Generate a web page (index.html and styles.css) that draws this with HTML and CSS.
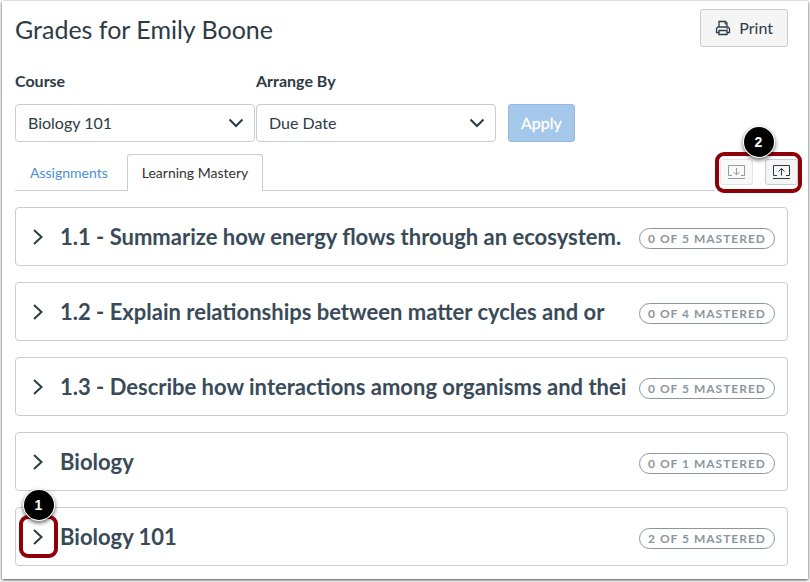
FILE: index.html
```html
<!DOCTYPE html>
<html lang="en">
  <head>
    <meta charset="UTF-8" />
    <meta name="viewport" content="width=device-width, initial-scale=1.0" />
    <title>Grades for Emily Boone</title>
    <link rel="stylesheet" href="styles.css">
  </head>
  <body>
    <main class="panel">
      <header class="header">
        <h1>Grades for Emily Boone</h1>
        <button type="button" class="btn">
          <svg width="16" height="16" viewBox="0 0 16 16" aria-hidden="true">
            <path d="M4 7V1.500h6.500L12 3v4M4 12.500H1.500v-4L3 7h10l1.500 1.500v4H12M4 10.500h8v4H4z" stroke-width="1.300" />
            <path d="M10 1.500V4h2M11.500 8.700h1.500" />
          </svg>
          Print
        </button>
      </header>

      <form class="filters">
        <div class="field">
          <label for="course">Course</label>
          <div class="select-wrap">
            <select id="course"><option>Biology 101</option></select>
            <svg class="caret" width="16" height="10" viewBox="0 0 16 10" aria-hidden="true"><path d="M1.500 1.500L8 8l6.500-6.500" /></svg>
          </div>
        </div>
        <div class="field">
          <label for="arrange">Arrange By</label>
          <div class="select-wrap">
            <select id="arrange"><option>Due Date</option></select>
            <svg class="caret" width="16" height="10" viewBox="0 0 16 10" aria-hidden="true"><path d="M1.500 1.500L8 8l6.500-6.500" /></svg>
          </div>
        </div>
        <button type="button" class="btn btn-apply">Apply</button>
      </form>

      <div class="tab-row">
        <nav class="tabs">
          <a href="#assignments" class="tab">Assignments</a>
          <a href="#mastery" class="tab active">Learning Mastery</a>
        </nav>
        <div class="actions">
          <button type="button" class="icon-btn faded" aria-label="Expand all">
            <svg width="17" height="14" viewBox="0 0 17 14" aria-hidden="true"><path d="M4 10.500H.5V.5h16v10H13M0 13.500h17M8.500 3v7M5.500 7l3 3 3-3" /></svg>
          </button>
          <button type="button" class="icon-btn" aria-label="Collapse all">
            <svg width="17" height="14" viewBox="0 0 17 14" aria-hidden="true"><path d="M4 10.500H.5V.5h16v10H13M0 13.500h17M8.500 10.500v-7M5.500 6.500l3-3 3 3" /></svg>
          </button>
          <span class="ring ring-actions"><span class="step">2</span></span>
        </div>
      </div>

      <section class="outcomes">
        <article class="card">
          <button type="button" class="toggle" aria-label="Expand 1.1">
            <svg width="12" height="18" viewBox="0 0 12 18" aria-hidden="true"><path d="M2 2l7.500 7L2 16" /></svg>
          </button>
          <h2>1.1 - Summarize how energy flows through an ecosystem.</h2>
          <span class="pill">0 OF 5 MASTERED</span>
        </article>
        <article class="card">
          <button type="button" class="toggle" aria-label="Expand 1.2">
            <svg width="12" height="18" viewBox="0 0 12 18" aria-hidden="true"><path d="M2 2l7.500 7L2 16" /></svg>
          </button>
          <h2>1.2 - Explain relationships between matter cycles and or</h2>
          <span class="pill">0 OF 4 MASTERED</span>
        </article>
        <article class="card">
          <button type="button" class="toggle" aria-label="Expand 1.3">
            <svg width="12" height="18" viewBox="0 0 12 18" aria-hidden="true"><path d="M2 2l7.500 7L2 16" /></svg>
          </button>
          <h2>1.3 - Describe how interactions among organisms and thei</h2>
          <span class="pill">0 OF 5 MASTERED</span>
        </article>
        <article class="card">
          <button type="button" class="toggle" aria-label="Expand Biology">
            <svg width="12" height="18" viewBox="0 0 12 18" aria-hidden="true"><path d="M2 2l7.500 7L2 16" /></svg>
          </button>
          <h2>Biology</h2>
          <span class="pill">0 OF 1 MASTERED</span>
        </article>
        <article class="card">
          <button type="button" class="toggle" aria-label="Expand Biology 101">
            <svg width="12" height="18" viewBox="0 0 12 18" aria-hidden="true"><path d="M2 2l7.500 7L2 16" /></svg>
            <span class="ring ring-toggle"><span class="step">1</span></span>
          </button>
          <h2>Biology 101</h2>
          <span class="pill">2 OF 5 MASTERED</span>
        </article>
      </section>
    </main>
  </body>
</html>
```
FILE: styles.css
```css
* {
  box-sizing: border-box;
}

body {
  margin: 0;
  padding: 1px 2px 3px;
  background-color: #fff;
  color: #2d3b45;
  font-family: Lato, "Liberation Sans", sans-serif;
  font-size: 16px;
}

button,
select {
  font: inherit;
  color: inherit;
}

.panel {
  padding: 8px 20px 13px 13px;
  background-color: #fff;
  box-shadow: 0 1px 3px rgba(0, 0, 0, 0.75);
}

.header {
  display: flex;
  justify-content: space-between;
  align-items: center;
}

h1 {
  margin: 0;
  padding-top: 2px;
  font-size: 25px;
  font-weight: 400;
  line-height: 36px;
}

.btn {
  display: flex;
  align-items: center;
  gap: 8px;
  height: 38px;
  padding: 0 14px 1px;
  background-color: #f5f5f5;
  border: 1px solid #c7cdd1;
  border-radius: 3px;
}

.btn-apply {
  margin-left: 12px;
  padding: 0 12px 1px;
  background-color: #a5c7ea;
  border-color: #96bade;
  color: #fff;
  -webkit-text-stroke: 0.3px #fff;
}

.filters {
  display: flex;
  align-items: flex-end;
  margin-top: 22px;
}

.field {
  width: 240px;
}

.field + .field {
  margin-left: 1px;
}

.field label {
  display: block;
  margin-bottom: 11px;
  font-weight: 700;
  line-height: 24px;
}

.select-wrap {
  position: relative;
}

select {
  display: block;
  appearance: none;
  width: 100%;
  height: 38px;
  padding: 0 36px 1px 12px;
  background-color: #fff;
  border: 1px solid #c7cdd1;
  border-radius: 4px;
}

.caret {
  position: absolute;
  top: 14px;
  right: 11px;
  pointer-events: none;
}

svg path {
  fill: none;
  stroke: currentColor;
}

.caret path,
.toggle path {
  stroke-width: 2;
}

.tab-row {
  display: flex;
  align-items: flex-end;
  margin: 12px -10px 16px 0;
}

.tabs {
  display: flex;
  flex: 1;
  border-bottom: 1px solid #c7cdd1;
}

.tab {
  height: 36px;
  padding: 0 19px 0 15px;
  font-size: 14px;
  line-height: 37px;
  color: #4a90d9;
  text-decoration: none;
}

.tab.active {
  margin-bottom: -1px;
  height: 37px;
  padding: 0 14px;
  background-color: #fff;
  border: 1px solid #c7cdd1;
  border-bottom: 0;
  border-radius: 3px 3px 0 0;
  color: #333;
  line-height: 35px;
}

.actions {
  position: relative;
  display: flex;
  gap: 12px;
  padding: 0 0 6px 5px;
}

.icon-btn {
  display: flex;
  align-items: center;
  justify-content: center;
  width: 33px;
  height: 26px;
  padding: 0;
  background-color: #f5f5f5;
  border: 1px solid #c7cdd1;
  border-radius: 3px;
}

.faded {
  opacity: 0.5;
}

/* numbered callouts */
.ring {
  position: absolute;
  border: 4px solid #900009;
  border-radius: 9px;
}

.ring-actions {
  inset: -7px -4px -2px 0;
}

.ring-toggle {
  inset: -7px 0 -6px;
}

.step {
  position: absolute;
  bottom: 100%;
  left: 50%;
  width: 30px;
  height: 30px;
  margin: 0 0 -1px -15px;
  background-color: #000;
  border-radius: 50%;
  box-shadow: 0 0 0 1px #fff, 0 2px 4px 1px rgba(0, 0, 0, 0.6);
  color: #fff;
  font: 700 14px/30px "Liberation Sans", sans-serif;
  text-align: center;
}

.outcomes {
  display: flex;
  flex-direction: column;
  gap: 16px;
}

.card {
  display: flex;
  align-items: center;
  height: 59px;
  padding: 0 12px 0 3px;
  border: 1px solid #c7cdd1;
  border-radius: 4px;
}

.toggle {
  position: relative;
  display: flex;
  flex: none;
  align-items: center;
  justify-content: center;
  width: 39px;
  height: 30px;
  margin-right: 2px;
  padding: 0 1px 0 0;
  background: none;
  border: 0;
}

h2 {
  flex: 1;
  min-width: 0;
  margin: 0;
  overflow: hidden;
  color: #394b58;
  font-size: 22px;
  font-weight: 700;
  line-height: 30px;
  white-space: nowrap;
}

.pill {
  flex: none;
  margin: 3px 0 0 10px;
  padding: 0 8px;
  border: 1px solid #8b969e;
  border-radius: 11px;
  color: #8b969e;
  font-size: 12px;
  font-weight: 700;
  letter-spacing: 1px;
  line-height: 19px;
}
```
